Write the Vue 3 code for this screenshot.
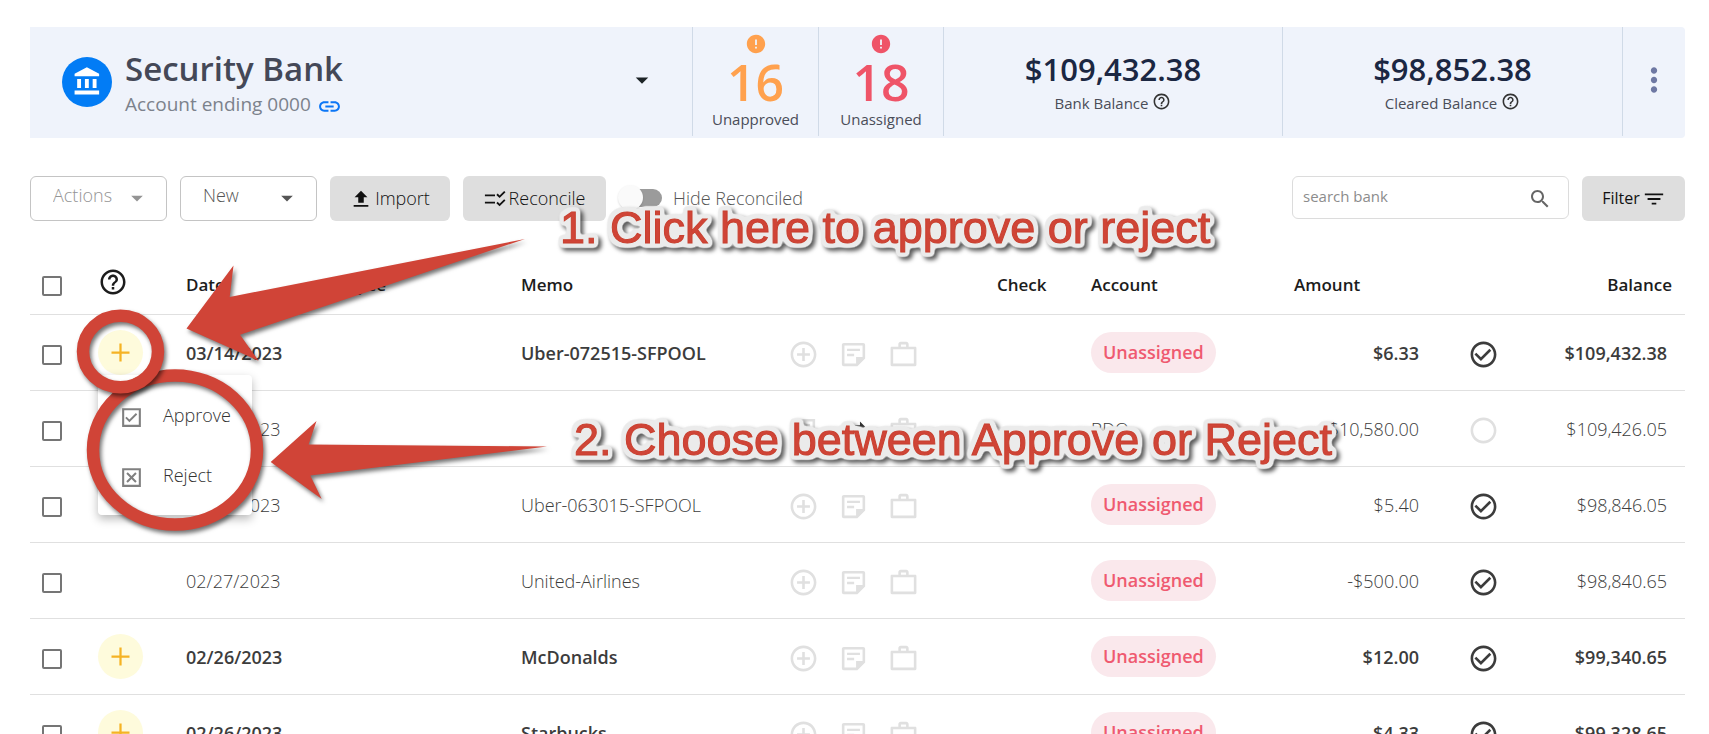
<script setup>
import { ref } from 'vue'

//--------- icons (24 x 24) -------------
const icons = {
  bank: 'M4 10v7h3v-7H4zm6 0v7h3v-7h-3zM2 22h19v-3H2v3zm14-12v7h3v-7h-3zm-4.5-9L2 6v2h19V6l-9.5-5z',
  link: 'M3.9 12c0-1.71 1.39-3.1 3.1-3.1h4V7H7c-2.76 0-5 2.24-5 5s2.24 5 5 5h4v-1.9H7c-1.71 0-3.1-1.39-3.1-3.1zM8 13h8v-2H8v2zm9-6h-4v1.9h4c1.71 0 3.1 1.39 3.1 3.1s-1.39 3.1-3.1 3.1h-4V17h4c2.76 0 5-2.24 5-5s-2.24-5-5-5z',
  caret: 'M7 10l5 5 5-5z',
  error: 'M12 2C6.48 2 2 6.48 2 12s4.48 10 10 10 10-4.48 10-10S17.52 2 12 2zm1 15h-2v-2h2v2zm0-4h-2V7h2v6z',
  help: 'M11 18h2v-2h-2v2zm1-16C6.48 2 2 6.48 2 12s4.48 10 10 10 10-4.48 10-10S17.52 2 12 2zm0 18c-4.41 0-8-3.59-8-8s3.59-8 8-8 8 3.59 8 8-3.59 8-8 8zm0-14c-2.21 0-4 1.79-4 4h2c0-1.1.9-2 2-2s2 .9 2 2c0 2-3 1.75-3 5h2c0-2.25 3-2.5 3-5 0-2.21-1.79-4-4-4z',
  dots: 'M12 8c1.1 0 2-.9 2-2s-.9-2-2-2-2 .9-2 2 .9 2 2 2zm0 2c-1.1 0-2 .9-2 2s.9 2 2 2 2-.9 2-2-.9-2-2-2zm0 6c-1.1 0-2 .9-2 2s.9 2 2 2 2-.9 2-2-.9-2-2-2z',
  upload: 'M9 16h6v-6h4l-7-7-7 7h4v6zM4 18.5h16v2H4z',
  checklist: 'M1 7h11v2H1zM1 15h11v2H1zM17 11l-3.5-3.5 1.4-1.4L17 8.2l5-5 1.4 1.5zM17 20l-3.5-3.5 1.4-1.4 2.1 2.1 5-5 1.4 1.5z',
  search: 'M15.5 14h-.79l-.28-.27C15.41 12.59 16 11.11 16 9.5 16 5.91 13.09 3 9.5 3S3 5.91 3 9.5 5.91 16 9.5 16c1.61 0 3.09-.59 4.23-1.57l.27.28v.79l5 4.99L20.49 19l-4.99-5zm-6 0C7.01 14 5 11.99 5 9.5S7.01 5 9.5 5 14 7.01 14 9.5 11.99 14 9.5 14z',
  filter: 'M9.500 18h5v-2h-5v2zM2 6v2h20V6H2zm3 7h14v-2H5v2z',
  add: 'M13 7h-2v4H7v2h4v4h2v-4h4v-2h-4V7zm-1-5C6.48 2 2 6.48 2 12s4.48 10 10 10 10-4.48 10-10S17.52 2 12 2zm0 18c-4.41 0-8-3.59-8-8s3.59-8 8-8 8 3.59 8 8-3.59 8-8 8z',
  note: 'M4.5 3C3.6 3 3 3.6 3 4.5v15c0 .9.6 1.5 1.5 1.5H15l6-6V4.5C21 3.6 20.4 3 19.5 3zM5 5h14v9h-5v5H5zM7 7.5h10v1.8H7zM7 11.5h5.5v1.8H7z',
  work: 'M21 6h-5V4c0-1-.8-1.8-1.8-1.8H9.8C8.8 2.2 8 3 8 4v2H3c-.6 0-1 .4-1 1v13c0 .6.4 1 1 1h18c.6 0 1-.4 1-1V7c0-.6-.4-1-1-1zM10 4.2h4V6h-4zM20 19H4V8h16z',
  doc: 'M3 3h18v18H3zM5 5v14h14V5zM7 7h3v10H7zM14 7h3v10h-3z',
  swap: 'M6.99 11L3 15l3.99 4v-3H14v-2H6.99v-3zM21 9l-3.99-4v3H10v2h7.01v3L21 9z',
  done: 'M16.59 7.58L10 14.17l-3.59-3.58L5 12l5 5 8-8zM12 2C6.48 2 2 6.48 2 12s4.48 10 10 10 10-4.48 10-10S17.52 2 12 2zm0 18c-4.42 0-8-3.58-8-8s3.58-8 8-8 8 3.58 8 8-3.58 8-8 8z',
  empty: 'M12 2C6.48 2 2 6.48 2 12s4.48 10 10 10 10-4.48 10-10S17.52 2 12 2zm0 18c-4.42 0-8-3.58-8-8s3.58-8 8-8 8 3.58 8 8-3.58 8-8 8z',
  plus: 'M13 4h-2v7H4v2h7v7h2v-7h7v-2h-7z',
  approve: 'M3 3v18h18V3zM5 5h14v14H5zM17.5 9l-1.3-1.3-6.2 6.2-2.7-2.7L6 12.5l4 4z',
  reject: 'M3 3v18h18V3zM5 5h14v14H5zM8.4 17l3.6-3.6 3.6 3.6 1.4-1.4-3.6-3.6L17 8.4 15.6 7 12 10.6 8.4 7 7 8.4l3.6 3.6L7 15.6z'
}

//--------- account -------------
const counts = [
  { label: 'Unapproved', value: 16, color: 'orange' },
  { label: 'Unassigned', value: 18, color: 'red' }
]
const balances = [
  { label: 'Bank Balance', value: '$109,432.38' },
  { label: 'Cleared Balance', value: '$98,852.38' }
]

//--------- transactions -------------
const rows = ref([
  { id: 1, date: '03/14/2023', memo: 'Uber-072515-SFPOOL', account: '', amount: '$6.33', balance: '$109,432.38', isNew: true, cleared: true },
  { id: 2, date: '03/13/2023', memo: '', account: 'BDO', amount: '$10,580.00', balance: '$109,426.05', isNew: false, cleared: false },
  { id: 3, date: '03/01/2023', memo: 'Uber-063015-SFPOOL', account: '', amount: '$5.40', balance: '$98,846.05', isNew: false, cleared: true },
  { id: 4, date: '02/27/2023', memo: 'United-Airlines', account: '', amount: '-$500.00', balance: '$98,840.65', isNew: false, cleared: true },
  { id: 5, date: '02/26/2023', memo: 'McDonalds', account: '', amount: '$12.00', balance: '$99,340.65', isNew: true, cleared: true },
  { id: 6, date: '02/26/2023', memo: 'Starbucks', account: '', amount: '$4.33', balance: '$99,328.65', isNew: true, cleared: true }
])

const hideReconciled = ref(false)
const search = ref('')
const selected = ref([])

// row whose approve / reject menu is open
const openMenu = ref(1)
const toggleMenu = (id) => {
  openMenu.value = openMenu.value === id ? null : id
}
const approve = (row) => {
  row.isNew = false
  openMenu.value = null
}
const reject = (row) => {
  rows.value = rows.value.filter((r) => r.id !== row.id)
  openMenu.value = null
}
</script>

<template>
  <main class="page">
    <header class="bank">
      <div class="account">
        <span class="logo"><svg viewBox="0 0 24 24"><path :d="icons.bank" /></svg></span>
        <div class="account-text">
          <h1>Security Bank</h1>
          <p>Account ending 0000 <svg class="link" viewBox="0 0 24 24"><path :d="icons.link" /></svg></p>
        </div>
        <button class="plain" aria-label="Choose account">
          <svg class="icon" viewBox="0 0 24 24"><path :d="icons.caret" /></svg>
        </button>
      </div>
      <div v-for="item in counts" :key="item.label" class="count" :class="item.color">
        <svg viewBox="0 0 24 24"><path :d="icons.error" /></svg>
        <strong>{{ item.value }}</strong>
        <span>{{ item.label }}</span>
      </div>
      <div v-for="item in balances" :key="item.label" class="balance">
        <strong>{{ item.value }}</strong>
        <span>{{ item.label }} <svg viewBox="0 0 24 24"><path :d="icons.help" /></svg></span>
      </div>
      <div class="more">
        <button class="plain" aria-label="More">
          <svg viewBox="0 0 24 24"><path :d="icons.dots" /></svg>
        </button>
      </div>
    </header>

    <div class="toolbar">
      <div class="select disabled">
        <select aria-label="Actions" disabled><option>Actions</option></select>
        <svg viewBox="0 0 24 24"><path :d="icons.caret" /></svg>
      </div>
      <div class="select">
        <select aria-label="New"><option>New</option></select>
        <svg viewBox="0 0 24 24"><path :d="icons.caret" /></svg>
      </div>
      <button class="tool import"><svg viewBox="0 0 24 24"><path :d="icons.upload" /></svg>Import</button>
      <button class="tool reconcile"><svg viewBox="0 0 24 24"><path :d="icons.checklist" /></svg>Reconcile</button>
      <label class="switch"><input v-model="hideReconciled" type="checkbox" />Hide Reconciled</label>
      <label class="search">
        <input v-model="search" type="text" placeholder="search bank" aria-label="search bank" />
        <svg viewBox="0 0 24 24"><path :d="icons.search" /></svg>
      </label>
      <button class="tool filter">Filter<svg viewBox="0 0 24 24"><path :d="icons.filter" /></svg></button>
    </div>

    <table>
      <colgroup>
        <col class="c-tick" /><col class="c-state" /><col class="c-date" /><col class="c-payee" /><col />
        <col class="c-tools" /><col class="c-check" /><col class="c-account" /><col class="c-amount" />
        <col class="c-cleared" /><col class="c-balance" />
      </colgroup>
      <thead>
        <tr>
          <th class="tick"><input type="checkbox" aria-label="Select all" /></th>
          <th class="state"><svg class="help" viewBox="0 0 24 24"><path :d="icons.help" /></svg></th>
          <th>Date</th>
          <th>Payee</th>
          <th>Memo</th>
          <th></th>
          <th>Check</th>
          <th>Account</th>
          <th>Amount</th>
          <th></th>
          <th class="last">Balance</th>
        </tr>
      </thead>
      <tbody>
        <tr v-for="row in rows" :key="row.id" :class="{ fresh: row.isNew }">
          <td class="tick"><input v-model="selected" type="checkbox" :value="row.id" :aria-label="'Select ' + row.memo" /></td>
          <td class="state">
            <button v-if="row.isNew" class="plus" aria-label="Approve or reject" @click="toggleMenu(row.id)">
              <svg viewBox="0 0 24 24"><path :d="icons.plus" /></svg>
            </button>
            <div v-if="openMenu === row.id" class="menu">
              <button @click="approve(row)"><svg viewBox="0 0 24 24"><path fill-rule="evenodd" :d="icons.approve" /></svg>Approve</button>
              <button @click="reject(row)"><svg viewBox="0 0 24 24"><path fill-rule="evenodd" :d="icons.reject" /></svg>Reject</button>
            </div>
          </td>
          <td>{{ row.date }}</td>
          <td></td>
          <td>{{ row.memo }}</td>
          <td>
            <div class="tools">
              <svg viewBox="0 0 24 24"><path fill-rule="evenodd" :d="row.account ? icons.doc : icons.add" /></svg>
              <svg viewBox="0 0 24 24" :class="{ dark: row.account }"><path fill-rule="evenodd" :d="row.account ? icons.swap : icons.note" /></svg>
              <svg viewBox="0 0 24 24"><path fill-rule="evenodd" :d="icons.work" /></svg>
            </div>
          </td>
          <td></td>
          <td>
            <span v-if="row.account">{{ row.account }}</span>
            <span v-else class="pill">Unassigned</span>
          </td>
          <td class="number">{{ row.amount }}</td>
          <td class="cleared">
            <svg viewBox="0 0 24 24" :class="{ off: !row.cleared }"><path :d="row.cleared ? icons.done : icons.empty" /></svg>
          </td>
          <td class="number last">{{ row.balance }}</td>
        </tr>
      </tbody>
    </table>

    <!-- instructions drawn over the table -->
    <svg class="guide" width="1400" height="560" viewBox="0 0 1400 560">
      <defs>
        <!-- pale rim round the letters, with a shadow under it -->
        <filter id="halo" filterUnits="userSpaceOnUse" x="530" y="190" width="840" height="300" color-interpolation-filters="sRGB">
          <feMorphology in="SourceAlpha" operator="dilate" radius="3" result="fat" />
          <feGaussianBlur in="fat" stdDeviation="2" result="soft" />
          <feComponentTransfer in="soft" result="rim">
            <feFuncA type="linear" slope="5" intercept="-0.8" />
          </feComponentTransfer>
          <feFlood flood-color="#ebebeb" />
          <feComposite in2="rim" operator="in" result="pale" />
          <feDropShadow in="pale" dx="3" dy="3" stdDeviation="2" flood-color="#000" flood-opacity="0.65" result="base" />
          <feMerge>
            <feMergeNode in="base" />
            <feMergeNode in="SourceGraphic" />
          </feMerge>
        </filter>
      </defs>
      <g class="shape">
        <ellipse cx="175" cy="450" rx="82" ry="74.5" />
      </g>
      <g class="shape">
        <ellipse cx="120.5" cy="351.5" rx="37.5" ry="35.7" />
      </g>
      <g class="shape arrow">
        <path d="M186.5 328.5L233.5 265.5 229.7 297 525 239 240 334.7 258.6 360.7Z" />
        <path d="M270.7 462L316.5 421 308.6 444.5 547 446.5 310.3 475.5 321.7 499Z" />
      </g>
      <g class="caption" filter="url(#halo)">
        <text x="560" y="243">1. Click here to approve or reject</text>
        <text x="574" y="455">2. Choose between Approve or Reject</text>
      </g>
    </svg>
  </main>
</template>

<style>
  body {
    margin: 0;
    background: #fff;
  }
</style>

<style scoped>
  .page {
    position: relative;
    box-sizing: border-box;
    height: 100vh;
    overflow: hidden;
    padding: 27px 24px 0 30px;
    font-family: "Open Sans", sans-serif;
    font-size: 18px;
    font-weight: 300;
    color: #3c3c3c;
  }
  svg {
    fill: currentColor;
    flex: none;
  }
  button, input, select {
    font: inherit;
    color: inherit;
    margin: 0;
  }
  button {
    cursor: pointer;
    border: 0;
  }
  .plain {
    background: none;
    padding: 0;
    display: flex;
  }

  /* account header */
  .bank {
    display: grid;
    grid-template-columns: 662fr 126fr 125fr 339fr 340fr 63fr;
    box-sizing: border-box;
    height: 111px;
    padding-bottom: 2px;
    background: #eff3fb;
    border-radius: 0 4px 4px 0;
    margin-bottom: 38px;
  }
  .bank > div + div {
    border-left: 1px solid #d0dae7;
  }
  .account {
    display: flex;
    align-items: center;
    padding-left: 32px;
    padding-right: 35px;
  }
  .logo {
    width: 50px;
    height: 50px;
    border-radius: 50%;
    background: #027cf5;
    color: #fff;
    display: flex;
    align-items: center;
    justify-content: center;
  }
  .logo svg {
    width: 31px;
    height: 31px;
  }
  .account-text {
    flex: 1;
    margin-left: 13px;
    padding-top: 5px;
  }
  h1 {
    margin: 0;
    font-size: 33px;
    line-height: 40px;
    font-weight: 600;
    color: #444857;
  }
  .account-text p {
    margin: 0;
    display: flex;
    align-items: center;
    gap: 6px;
    font-size: 19px;
    line-height: 30px;
    font-weight: 400;
    color: #7c828c;
  }
  .link {
    width: 25px;
    height: 25px;
    margin-top: 4px;
    color: #0b76f6;
  }
  .icon {
    width: 30px;
    height: 30px;
    margin-bottom: 4px;
    color: #1c2326;
  }
  .count {
    display: flex;
    flex-direction: column;
    align-items: center;
    padding-top: 6px;
  }
  .count svg {
    width: 22px;
    height: 22px;
  }
  .count strong {
    font-size: 50px;
    line-height: 55px;
    font-weight: 600;
  }
  .count span {
    font-size: 15px;
    line-height: 18px;
    font-weight: 400;
    color: #4a4d58;
  }
  .orange {
    color: #ffa14e;
  }
  .red {
    color: #ef5468;
  }
  .balance {
    display: flex;
    flex-direction: column;
    align-items: center;
    padding-top: 20px;
  }
  .balance strong {
    font-size: 31px;
    line-height: 44px;
    font-weight: 600;
    color: #1b2742;
  }
  .balance span {
    display: flex;
    align-items: center;
    gap: 4px;
    font-size: 15px;
    line-height: 24px;
    font-weight: 400;
    color: #4a4d58;
  }
  .balance svg {
    width: 19px;
    height: 19px;
    margin-bottom: 4px;
    color: #333;
  }
  .more {
    display: flex;
    align-items: center;
    justify-content: center;
    padding-bottom: 4px;
    color: #6e78a3;
  }
  .more svg {
    width: 38px;
    height: 38px;
  }

  /* toolbar */
  .toolbar {
    display: flex;
    align-items: flex-start;
    gap: 13px;
    margin-bottom: 33px;
  }
  .select {
    position: relative;
    width: 137px;
    color: #555;
  }
  .select select {
    appearance: none;
    box-sizing: border-box;
    width: 100%;
    height: 45px;
    padding: 0 40px 8px 22px;
    background: #fff;
    border: 1px solid #c4c4c4;
    border-radius: 6px;
    opacity: 1;
  }
  .select svg {
    position: absolute;
    right: 16px;
    top: 8px;
    width: 28px;
    height: 28px;
    pointer-events: none;
  }
  .disabled {
    color: #949494;
  }
  .tool {
    display: flex;
    align-items: center;
    justify-content: center;
    gap: 3px;
    height: 45px;
    padding: 0 0 2px;
    border-radius: 6px;
    background: #dedede;
    color: #111;
  }
  .tool svg {
    width: 22px;
    height: 22px;
    margin-top: 3px;
  }
  .import {
    width: 120px;
  }
  .reconcile {
    width: 143px;
  }
  .filter {
    width: 103px;
    font-size: 16px;
    font-weight: 400;
  }
  .switch {
    display: flex;
    align-items: center;
    gap: 11px;
    height: 43px;
    color: #555;
  }
  .switch input {
    appearance: none;
    display: flex;
    align-items: center;
    width: 38px;
    height: 18px;
    margin-left: 5px;
    border-radius: 9px;
    background: #9b9b9b;
  }
  .switch input::before {
    content: "";
    width: 25px;
    height: 25px;
    margin-left: -6px;
    border-radius: 50%;
    background: #fafafa;
    box-shadow: 0 1px 2px rgba(0, 0, 0, .15);
  }
  .switch input:checked::before {
    margin-left: 19px;
  }
  .search {
    display: flex;
    align-items: center;
    box-sizing: border-box;
    width: 277px;
    height: 43px;
    margin-left: auto;
    padding: 0 16px 0 10px;
    border: 1px solid #dcdcdc;
    border-radius: 6px;
    color: #666;
  }
  .search input {
    flex: 1;
    min-width: 0;
    padding: 0 0 4px;
    border: 0;
    outline: 0;
    font-size: 15px;
    font-weight: 400;
  }
  .search input::placeholder {
    color: #8c8c8c;
  }
  .search svg {
    width: 24px;
    height: 24px;
    margin-top: 2px;
  }

  /* table */
  table {
    width: 100%;
    table-layout: fixed;
    border-collapse: collapse;
  }
  .c-tick { width: 68px; }
  .c-state { width: 88px; }
  .c-date { width: 151px; }
  .c-payee { width: 184px; }
  .c-tools { width: 209px; }
  .c-check { width: 94px; }
  .c-account { width: 203px; }
  .c-amount { width: 125px; }
  .c-cleared { width: 128px; }
  .c-balance { width: 138px; }
  th, td {
    padding: 0;
    text-align: left;
    border-bottom: 1px solid #e0e0e0;
  }
  th {
    height: 60px;
    font-size: 17px;
    font-weight: 600;
    color: #1c1c1c;
  }
  td {
    height: 75px;
    font-weight: 300;
  }
  .fresh td {
    font-weight: 600;
  }
  .tick input {
    appearance: none;
    display: block;
    box-sizing: border-box;
    width: 20px;
    height: 20px;
    margin: 4px 0 0 12px;
    border: 2px solid #757575;
    border-radius: 2px;
    background: #fff;
  }
  .tick input:checked {
    background: #757575;
  }
  .help {
    display: block;
    width: 30px;
    height: 30px;
    margin-bottom: 4px;
  }
  .state {
    position: relative;
  }
  .plus {
    display: flex;
    align-items: center;
    justify-content: center;
    width: 45px;
    height: 45px;
    padding: 0;
    border-radius: 50%;
    background: #fefbdc;
    color: #f5b324;
  }
  .plus svg {
    width: 27px;
    height: 27px;
  }
  .menu {
    position: absolute;
    z-index: 2;
    top: 60px;
    left: 0;
    box-sizing: border-box;
    width: 154px;
    padding: 10px 0;
    border-radius: 4px;
    background: #fff;
    box-shadow: 0 4px 10px rgba(0, 0, 0, .28);
  }
  .menu button {
    display: flex;
    align-items: center;
    gap: 19px;
    width: 100%;
    height: 60px;
    padding: 0 0 0 21px;
    background: none;
    color: #333;
    font-size: 18px;
    font-weight: 300;
  }
  .menu svg {
    width: 25px;
    height: 25px;
    margin-top: 4px;
    color: #808080;
  }
  .tools {
    display: flex;
    gap: 19px;
    padding-top: 3px;
    color: #e0e0e0;
  }
  .tools svg {
    width: 31px;
    height: 31px;
  }
  .tools .dark {
    color: #333;
  }
  .pill {
    display: inline-block;
    padding: 0 12px;
    border-radius: 21px;
    background: #fae8ec;
    color: #ef5a70;
    font-weight: 600;
    line-height: 41px;
  }
  .number {
    text-align: right;
  }
  .cleared svg {
    display: block;
    width: 31px;
    height: 31px;
    margin: 3px auto 0;
  }
  .cleared .off {
    color: #e0e0e0;
  }
  td.last {
    padding-right: 18px;
  }
  th.last {
    text-align: right;
    padding-right: 13px;
  }

  /* guide */
  .guide {
    position: absolute;
    z-index: 3;
    left: 0;
    top: 0;
    pointer-events: none;
  }
  .shape {
    fill: none;
    stroke: #d04437;
    stroke-width: 12.5;
    filter: drop-shadow(2px 3px 2px rgba(0, 0, 0, .55));
  }
  .arrow {
    fill: #d04437;
    stroke: none;
  }
  .caption {
    font-family: "Liberation Sans", Arial, sans-serif;
    font-size: 45px;
    font-weight: 400;
    fill: #d04437;
    stroke: #c8402f;
    stroke-width: 1;
  }
</style>
